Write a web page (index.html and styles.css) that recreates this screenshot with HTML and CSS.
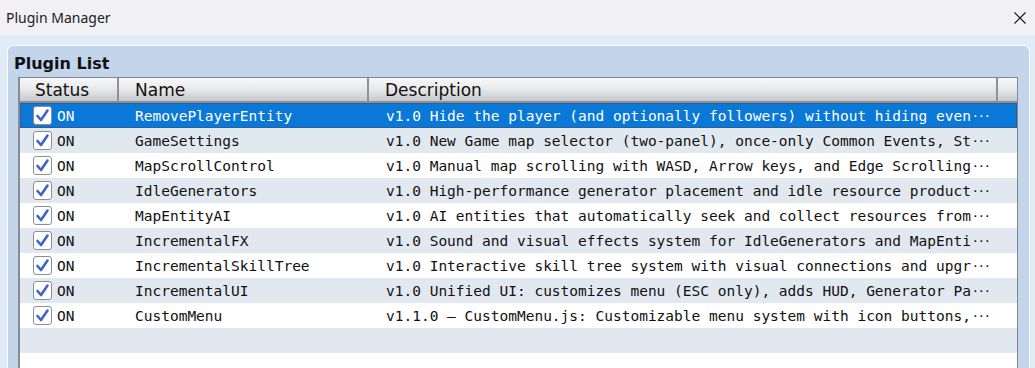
FILE: index.html
```html
<!DOCTYPE html>
<html lang="en">
<head>
    <meta charset="UTF-8">
    <meta name="viewport" content="width=device-width, initial-scale=1.0">
    <title>Plugin Manager</title>
    <link rel="stylesheet" href="styles.css">
</head>
<body>
    <div class="titlebar">
        <span class="title">Plugin Manager</span>
        <svg class="close" width="12" height="12" viewBox="0 0 12 12">
            <path d="M0.5 0.5L11.5 11.5M11.5 0.5L0.5 11.5" stroke="#111" stroke-width="1.1" fill="none"/>
        </svg>
    </div>
    <div class="content">
        <div class="panel">
            <div class="panel-title">Plugin List</div>
            <div class="list">
                <div class="head">
                    <div class="c-status">Status</div>
                    <div class="c-name">Name</div>
                    <div class="c-desc">Description</div>
                    <div class="c-rest"></div>
                </div>
                <div class="rows">
                    <div class="row selected">
                        <div class="c-status"><span class="check"><svg width="17" height="17" viewBox="0 0 17 17"><path d="M3.5 9L7 13L13.5 3.5" stroke="#3f64c6" stroke-width="2.6" fill="none" stroke-linecap="round" stroke-linejoin="round"/></svg></span>ON</div>
                        <div class="c-name">RemovePlayerEntity</div>
                        <div class="c-desc">v1.0 Hide the player (and optionally followers) without hiding even<span class="dots">···</span></div>
                    </div>
                    <div class="row alt">
                        <div class="c-status"><span class="check"><svg width="17" height="17" viewBox="0 0 17 17"><path d="M3.5 9L7 13L13.5 3.5" stroke="#3f64c6" stroke-width="2.6" fill="none" stroke-linecap="round" stroke-linejoin="round"/></svg></span>ON</div>
                        <div class="c-name">GameSettings</div>
                        <div class="c-desc">v1.0 New Game map selector (two-panel), once-only Common Events, St<span class="dots">···</span></div>
                    </div>
                    <div class="row">
                        <div class="c-status"><span class="check"><svg width="17" height="17" viewBox="0 0 17 17"><path d="M3.5 9L7 13L13.5 3.5" stroke="#3f64c6" stroke-width="2.6" fill="none" stroke-linecap="round" stroke-linejoin="round"/></svg></span>ON</div>
                        <div class="c-name">MapScrollControl</div>
                        <div class="c-desc">v1.0 Manual map scrolling with WASD, Arrow keys, and Edge Scrolling<span class="dots">···</span></div>
                    </div>
                    <div class="row alt">
                        <div class="c-status"><span class="check"><svg width="17" height="17" viewBox="0 0 17 17"><path d="M3.5 9L7 13L13.5 3.5" stroke="#3f64c6" stroke-width="2.6" fill="none" stroke-linecap="round" stroke-linejoin="round"/></svg></span>ON</div>
                        <div class="c-name">IdleGenerators</div>
                        <div class="c-desc">v1.0 High-performance generator placement and idle resource product<span class="dots">···</span></div>
                    </div>
                    <div class="row">
                        <div class="c-status"><span class="check"><svg width="17" height="17" viewBox="0 0 17 17"><path d="M3.5 9L7 13L13.5 3.5" stroke="#3f64c6" stroke-width="2.6" fill="none" stroke-linecap="round" stroke-linejoin="round"/></svg></span>ON</div>
                        <div class="c-name">MapEntityAI</div>
                        <div class="c-desc">v1.0 AI entities that automatically seek and collect resources from<span class="dots">···</span></div>
                    </div>
                    <div class="row alt">
                        <div class="c-status"><span class="check"><svg width="17" height="17" viewBox="0 0 17 17"><path d="M3.5 9L7 13L13.5 3.5" stroke="#3f64c6" stroke-width="2.6" fill="none" stroke-linecap="round" stroke-linejoin="round"/></svg></span>ON</div>
                        <div class="c-name">IncrementalFX</div>
                        <div class="c-desc">v1.0 Sound and visual effects system for IdleGenerators and MapEnti<span class="dots">···</span></div>
                    </div>
                    <div class="row">
                        <div class="c-status"><span class="check"><svg width="17" height="17" viewBox="0 0 17 17"><path d="M3.5 9L7 13L13.5 3.5" stroke="#3f64c6" stroke-width="2.6" fill="none" stroke-linecap="round" stroke-linejoin="round"/></svg></span>ON</div>
                        <div class="c-name">IncrementalSkillTree</div>
                        <div class="c-desc">v1.0 Interactive skill tree system with visual connections and upgr<span class="dots">···</span></div>
                    </div>
                    <div class="row alt">
                        <div class="c-status"><span class="check"><svg width="17" height="17" viewBox="0 0 17 17"><path d="M3.5 9L7 13L13.5 3.5" stroke="#3f64c6" stroke-width="2.6" fill="none" stroke-linecap="round" stroke-linejoin="round"/></svg></span>ON</div>
                        <div class="c-name">IncrementalUI</div>
                        <div class="c-desc">v1.0 Unified UI: customizes menu (ESC only), adds HUD, Generator Pa<span class="dots">···</span></div>
                    </div>
                    <div class="row">
                        <div class="c-status"><span class="check"><svg width="17" height="17" viewBox="0 0 17 17"><path d="M3.5 9L7 13L13.5 3.5" stroke="#3f64c6" stroke-width="2.6" fill="none" stroke-linecap="round" stroke-linejoin="round"/></svg></span>ON</div>
                        <div class="c-name">CustomMenu</div>
                        <div class="c-desc">v1.1.0 — CustomMenu.js: Customizable menu system with icon buttons,<span class="dots">···</span></div>
                    </div>
                    <div class="row alt"></div>
                </div>
            </div>
        </div>
    </div>
</body>
</html>
```

FILE: styles.css
```css
body{
    margin: 0;
    background: #e1ebf8;
    height: 368px;
    overflow: hidden;
    display: flex;
    flex-direction: column;
}
.titlebar{
    height: 35px;
    flex: none;
    background: #f1f1f5;
    display: flex;
    align-items: center;
    justify-content: space-between;
    padding: 0 9px 0 6px;
    font-family: "Noto Sans", sans-serif;
    font-size: 14px;
    color: #1b1b1b;
}
.title{
    margin-top: -1px;
}
.content{
    flex: 1;
    display: flex;
    padding: 10px 5px 0 7px;
    min-height: 0;
}
.panel{
    flex: 1;
    display: flex;
    flex-direction: column;
    background: #c3d5ea;
    border: 1px solid #fbfdff;
    border-bottom: none;
    border-radius: 6px 6px 0 0;
    padding: 0 11px 0 10px;
}
.panel-title{
    font-family: "DejaVu Sans", sans-serif;
    font-weight: bold;
    font-size: 16px;
    line-height: 24px;
    padding-top: 6px;
    margin: 0 0 1px -4px;
    color: #111;
}
.list{
    flex: 1;
    background: #fff;
    border: 1px solid #7f8791;
    border-left: 2px solid #868c94;
    border-bottom: none;
    display: flex;
    flex-direction: column;
}
.head{
    height: 23px;
    display: flex;
    background: linear-gradient(#f8f8f8, #e9eaeb 45%, #c7c9cc);
    border-bottom: 2px solid #8a8f96;
    font-family: "DejaVu Sans", sans-serif;
    font-size: 17px;
    line-height: 24px;
    color: #111;
}
.head > div{
    border-right: 2px solid #8e9196;
    box-sizing: border-box;
}
.head .c-rest{
    flex: 1;
    border-right: none;
}
.c-status{
    width: 99px;
    padding-left: 15px;
    box-sizing: border-box;
    flex: none;
}
.c-name{
    width: 250px;
    padding-left: 16px;
    box-sizing: border-box;
    flex: none;
}
.c-desc{
    width: 629px;
    padding-left: 16px;
    box-sizing: border-box;
    flex: none;
    white-space: nowrap;
    overflow: hidden;
}
.rows{
    font-family: "DejaVu Sans Mono", monospace;
    font-size: 14.5px;
    color: #111;
}
.row{
    height: 25px;
    display: flex;
    align-items: center;
    box-sizing: border-box;
}
.row .c-desc{
    padding-left: 17px;
}
.row.alt{
    background: #e2e8f0;
}
.row.selected{
    background: #0a78d7;
    color: #fff;
    box-shadow: inset 0 0 0 1px #2a5fa5;
}
.row .c-status{
    padding-left: 13px;
    display: flex;
    align-items: center;
}
.check{
    width: 17px;
    height: 17px;
    border: 1px solid #8d8f93;
    border-radius: 3px;
    background: #fff;
    margin-right: 5px;
    display: flex;
}
.dots{
    font-family: "DejaVu Sans", sans-serif;
    letter-spacing: 1.4px;
    margin-left: 2px;
}
```
